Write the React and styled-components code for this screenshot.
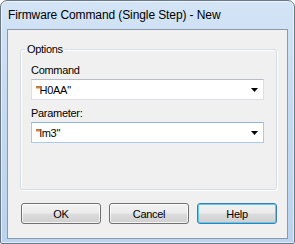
import React from "react";
import styled, { createGlobalStyle } from "styled-components";

const GlobalStyle = createGlobalStyle`
  html, body {
    margin: 0;
    padding: 0;
    background: #ffffff;
  }
  * {
    box-sizing: border-box;
  }
`;

const Window = styled.div`
  width: 295px;
  height: 244px;
  display: flex;
  flex-direction: column;
  border: 1px solid #6b7785;
  border-radius: 7px 7px 2px 2px;
  background: linear-gradient(180deg, #d3e4f5 0%, #c6dbf1 40%, #bad3ee 100%);
  padding: 0 6px 4px 6px;
  font-family: "Liberation Sans", Arial, sans-serif;
  box-shadow: inset 0 0 0 1px rgba(255, 255, 255, 0.55);
`;

const TitleBar = styled.div`
  height: 28px;
  flex: none;
  display: flex;
  align-items: center;
  padding: 0 0 1px 1px;
  font-size: 12px;
  letter-spacing: -0.1px;
  color: #000000;
`;

const Client = styled.div`
  flex: 1;
  display: flex;
  flex-direction: column;
  border: 1px solid #8b9aab;
  background: #f0f0f0;
  padding: 13px 10px 0 12px;
  font-size: 11px;
  letter-spacing: -0.3px;
  color: #000000;
`;

const GroupBox = styled.fieldset`
  margin: 0;
  height: 147px;
  padding: 7px 12px 0 10px;
  border: 1px solid #d5dfe5;
  border-radius: 3px;
  box-shadow: 1px 1px 0 #ffffff, inset 1px 1px 0 #ffffff;
  display: flex;
  flex-direction: column;
`;

const Legend = styled.legend`
  padding: 0 2px;
  margin-left: -6px;
  line-height: 13px;
`;

const FieldLabel = styled.div`
  height: 14px;
  line-height: 14px;
  margin-bottom: 2px;
  margin-top: ${(p) => p.$top || 0}px;
`;

const Combo = styled.div`
  height: 21px;
  display: flex;
  align-items: center;
  background: #ffffff;
  border: 1px solid ${(p) => (p.$active ? "#a9c9e6" : "#dcdfe4")};
  border-top-color: ${(p) => (p.$active ? "#8fb6da" : "#b8bcc4")};
  padding: 0 0 0 4px;
`;

const ComboText = styled.span`
  flex: 1;
`;

const ArrowCell = styled.div`
  width: 16px;
  height: 100%;
  display: flex;
  align-items: center;
  justify-content: center;
  margin-right: 1px;
`;

const ButtonRow = styled.div`
  display: flex;
  justify-content: flex-end;
  gap: 8px;
  margin-top: 13px;
`;

const Button = styled.button`
  width: 80px;
  height: 21px;
  padding: 0;
  font-family: inherit;
  font-size: 11px;
  letter-spacing: -0.3px;
  color: #000000;
  border: 1px solid ${(p) => (p.$default ? "#3c7fb1" : "#707070")};
  border-radius: 3px;
  background: linear-gradient(
    180deg,
    #f2f2f2 0%,
    #ebebeb 48%,
    #dddddd 52%,
    #cfcfcf 100%
  );
  box-shadow: inset 0 0 0 1px
    ${(p) => (p.$default ? "#5ccaf3" : "rgba(255,255,255,0.75)")};
`;

const DropArrow = () => (
  <svg width="7" height="4" viewBox="0 0 7 4">
    <path d="M0 0 H7 L3.5 4 Z" fill="#000000" />
  </svg>
);

const ComboBox = ({ value, active }) => (
  <Combo $active={active}>
    <ComboText>{value}</ComboText>
    <ArrowCell>
      <DropArrow />
    </ArrowCell>
  </Combo>
);

const App = () => (
  <>
    <GlobalStyle />
    <Window>
      <TitleBar>Firmware Command (Single Step) - New</TitleBar>
      <Client>
        <GroupBox>
          <Legend>Options</Legend>
          <FieldLabel>Command</FieldLabel>
          <ComboBox value={'"H0AA"'} />
          <FieldLabel $top={6}>Parameter:</FieldLabel>
          <ComboBox value={'"lm3"'} active />
        </GroupBox>
        <ButtonRow>
          <Button>OK</Button>
          <Button>Cancel</Button>
          <Button $default>Help</Button>
        </ButtonRow>
      </Client>
    </Window>
  </>
);

export default App;
